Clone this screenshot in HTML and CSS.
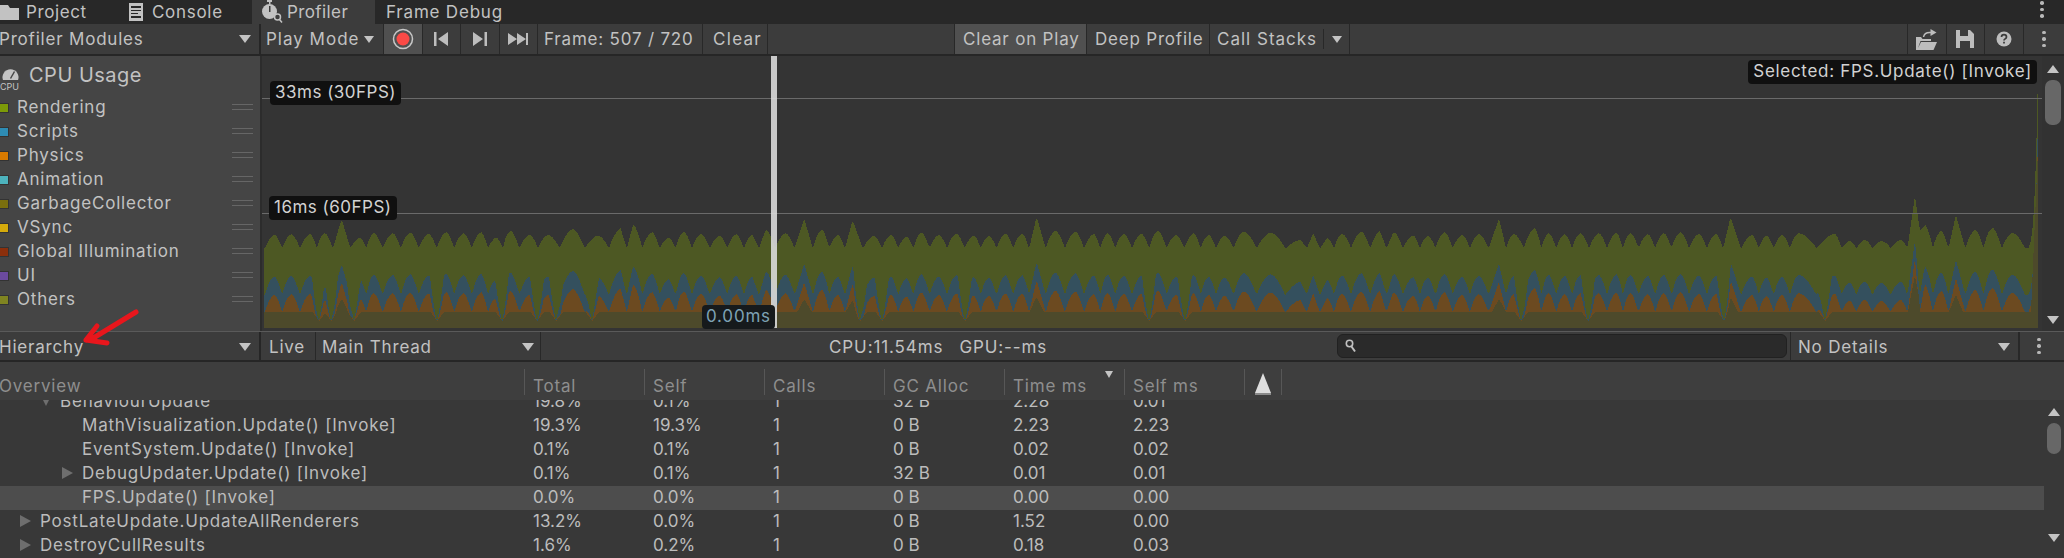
FILE: index.html
```html
<!DOCTYPE html>
<html lang="en">
<head>
  <meta charset="UTF-8">
  <title>Profiler</title>
  <link rel="stylesheet" href="styles.css">
</head>
<body>

<div class="tabs">
  <div class="tab tab-project">
    <svg class="ic" width="20" height="16" viewBox="0 0 20 16"><path d="M0 1h8l2 3h9v12H0z" fill="#c2c2c2"/></svg>
    <span>Project</span>
  </div>
  <div class="tab tab-console">
    <svg class="ic" width="16" height="18" viewBox="0 0 16 18"><path d="M1 0h14v18H1z" fill="#c2c2c2"/><path d="M3 3h10v2H3zM3 7h10v1H3zM3 10h7v1H3zM3 13h10v2H3z" fill="#282828"/></svg>
    <span>Console</span>
  </div>
  <div class="tab tab-profiler">
    <svg class="ic" width="22" height="24" viewBox="0 0 22 24"><path d="M6 0h5v2H9.500v2H8V2H6z" fill="#c2c2c2"/><circle cx="8.500" cy="11.500" r="7.500" fill="#c2c2c2"/><path d="M8 6h1.500v6H8z" fill="#3c3c3c"/><circle cx="16.500" cy="17" r="3" fill="#3c3c3c" stroke="#c2c2c2" stroke-width="1.500"/><path d="M18.500 19.500l2.500 3" stroke="#c2c2c2" stroke-width="1.500"/></svg>
    <span>Profiler</span>
  </div>
  <div class="tab tab-debug"><span>Frame Debug</span></div>
  <div class="tab-spacer"></div>
  <div class="dots dots-tabs"><i></i><i></i><i></i></div>
</div>

<div class="toolbar">
  <div class="tb tb-modules"><span class="cut">Profiler Modules</span><b class="arrow"></b></div>
  <div class="tb tb-mode"><span>Play Mode</span><b class="arrow arrow-sm"></b></div>
  <div class="tb tb-icon tb-on">
    <svg width="22" height="22" viewBox="0 0 22 22"><circle cx="11" cy="11" r="9.500" fill="none" stroke="#c8c8c8" stroke-width="1.500"/><circle cx="11" cy="11" r="6.500" fill="#fb4a46"/></svg>
  </div>
  <div class="tb tb-icon">
    <svg width="16" height="16" viewBox="0 0 16 16"><path d="M1 1h2.500v14H1zM15 1v14L5 8z" fill="#bdbdbd"/></svg>
  </div>
  <div class="tb tb-icon">
    <svg width="16" height="16" viewBox="0 0 16 16"><path d="M12.500 1H15v14h-2.500zM1 1v14l10-7z" fill="#bdbdbd"/></svg>
  </div>
  <div class="tb tb-icon">
    <svg width="22" height="16" viewBox="0 0 22 16"><path d="M1 2v12l9-6zM10 2v12l9-6zM19 2h2v12h-2z" fill="#bdbdbd"/></svg>
  </div>
  <div class="tb tb-frame">Frame: 507 / 720</div>
  <div class="tb tb-clear">Clear</div>
  <div class="tb-spacer tb-spacer-1"></div>
  <div class="tb tb-cop tb-on">Clear on Play</div>
  <div class="tb tb-deep">Deep Profile</div>
  <div class="tb tb-stacks"><span class="stacks-label">Call Stacks</span><b class="arrow arrow-sm"></b></div>
  <div class="tb-spacer"></div>
  <div class="tb tb-tool">
    <svg width="21" height="21" viewBox="0 0 21 21"><path d="M0 8h5l1.500 2H15v2H4.500L2 19l3-6h16l-3.500 8H0z" fill="#bdbdbd"/><path d="M7.500 8c.5-3 3.500-5 8-4.500" fill="none" stroke="#bdbdbd" stroke-width="1.500"/><path d="M14.500 0l6 3.500-6 3.500z" fill="#bdbdbd"/></svg>
  </div>
  <div class="tb tb-tool">
    <svg width="18" height="18" viewBox="0 0 18 18"><path fill-rule="evenodd" d="M0 0h14l4 4v14H0zM4 0v6h8V0zM4 11v7h10v-7z" fill="#bdbdbd"/></svg>
  </div>
  <div class="tb tb-tool">
    <svg width="16" height="16" viewBox="0 0 16 16"><circle cx="8" cy="8" r="7.500" fill="#bdbdbd"/><path d="M5.500 6c0-3.200 5-3.200 5 0 0 2-2.500 1.800-2.500 3.500" fill="none" stroke="#3c3c3c" stroke-width="1.700"/><path d="M7.100 10.700h1.800v1.800H7.100z" fill="#3c3c3c"/></svg>
  </div>
  <div class="tb-last"><div class="dots"><i></i><i></i><i></i></div></div>
</div>

<div class="profiler">
  <div class="modules">
    <div class="module-head">
      <svg class="cpu-ic" width="22" height="26" viewBox="0 0 22 26">
        <path d="M3 14a8 8 0 1 1 15 0z" fill="#c4c4c4"/><path d="M10 12l4-7 1 1-4 7z" fill="#454545"/>
        <text x="0" y="24" class="cpu-txt">CPU</text>
      </svg>
      <span class="module-title">CPU Usage</span>
    </div>
    <div class="legend">
      <div class="legend-row"><i class="sw sw-rendering"></i><span>Rendering</span><u></u></div>
      <div class="legend-row"><i class="sw sw-scripts"></i><span>Scripts</span><u></u></div>
      <div class="legend-row"><i class="sw sw-physics"></i><span>Physics</span><u></u></div>
      <div class="legend-row"><i class="sw sw-animation"></i><span>Animation</span><u></u></div>
      <div class="legend-row"><i class="sw sw-gc"></i><span>GarbageCollector</span><u></u></div>
      <div class="legend-row"><i class="sw sw-vsync"></i><span>VSync</span><u></u></div>
      <div class="legend-row"><i class="sw sw-gi"></i><span>Global Illumination</span><u></u></div>
      <div class="legend-row"><i class="sw sw-ui"></i><span>UI</span><u></u></div>
      <div class="legend-row"><i class="sw sw-others"></i><span>Others</span><u></u></div>
    </div>
  </div>

  <div class="chart">
    <svg id="graph" class="graph" width="1780" height="275" viewBox="0 0 1780 275" shape-rendering="crispEdges"></svg>
    <div class="gridline line-33"></div>
    <div class="gridline line-16"></div>
    <div class="frame-bar"></div>
    <div class="tag tag-33">33ms (30FPS)</div>
    <div class="tag tag-16">16ms (60FPS)</div>
    <div class="tag tag-time">0.00ms</div>
    <div class="tag tag-selected">Selected: FPS.Update() [Invoke]</div>
  </div>

  <div class="vscroll vscroll-chart">
    <b class="arrow arrow-up"></b>
    <div class="thumb thumb-chart"></div>
    <b class="arrow"></b>
  </div>
</div>

<div class="hbar">
  <div class="tb tb-modules"><span class="cut">Hierarchy</span><b class="arrow"></b></div>
  <div class="tb tb-live">Live</div>
  <div class="tb tb-thread"><span>Main Thread</span><b class="arrow"></b></div>
  <div class="stats"><span>CPU:11.54ms</span><span>GPU:--ms</span></div>
  <div class="search">
    <svg width="12" height="14" viewBox="0 0 12 14"><circle cx="4.500" cy="4.500" r="3.200" fill="none" stroke="#c0c0c0" stroke-width="1.600"/><path d="M6.500 7.500l3.500 5" stroke="#c0c0c0" stroke-width="2"/></svg>
  </div>
  <div class="tb tb-details"><span>No Details</span><b class="arrow"></b></div>
  <div class="tb-last tb-last-h"><div class="dots"><i></i><i></i><i></i></div></div>
</div>

<div class="thead row-grid">
  <div class="th th-name">Overview</div>
  <div class="th">Total</div>
  <div class="th">Self</div>
  <div class="th">Calls</div>
  <div class="th">GC Alloc</div>
  <div class="th">Time ms<b class="sort"></b></div>
  <div class="th">Self ms</div>
  <div class="th th-warn">
    <svg width="18" height="24" viewBox="0 0 18 24"><path d="M9 1l8 20H1z" fill="#dedede"/><path d="M1 21h16v2H1z" fill="#8a8a8a"/></svg>
  </div>
</div>

<div class="body">
  <div class="rows">
    <div class="row row-grid row-top">
      <div class="name ind-2"><b class="tw tw-open"></b>BehaviourUpdate</div>
      <div>19.8%</div><div>0.1%</div><div>1</div><div>32 B</div><div>2.28</div><div>0.01</div>
    </div>
    <div class="row row-grid">
      <div class="name ind-3">MathVisualization.Update() [Invoke]</div>
      <div>19.3%</div><div>19.3%</div><div>1</div><div>0 B</div><div>2.23</div><div>2.23</div>
    </div>
    <div class="row row-grid">
      <div class="name ind-3">EventSystem.Update() [Invoke]</div>
      <div>0.1%</div><div>0.1%</div><div>1</div><div>0 B</div><div>0.02</div><div>0.02</div>
    </div>
    <div class="row row-grid">
      <div class="name ind-3"><b class="tw"></b>DebugUpdater.Update() [Invoke]</div>
      <div>0.1%</div><div>0.1%</div><div>1</div><div>32 B</div><div>0.01</div><div>0.01</div>
    </div>
    <div class="row row-grid row-sel">
      <div class="name ind-3">FPS.Update() [Invoke]</div>
      <div>0.0%</div><div>0.0%</div><div>1</div><div>0 B</div><div>0.00</div><div>0.00</div>
    </div>
    <div class="row row-grid">
      <div class="name ind-1"><b class="tw"></b>PostLateUpdate.UpdateAllRenderers</div>
      <div>13.2%</div><div>0.0%</div><div>1</div><div>0 B</div><div>1.52</div><div>0.00</div>
    </div>
    <div class="row row-grid">
      <div class="name ind-1"><b class="tw"></b>DestroyCullResults</div>
      <div>1.6%</div><div>0.2%</div><div>1</div><div>0 B</div><div>0.18</div><div>0.03</div>
    </div>
  </div>
  <div class="vscroll vscroll-table">
    <b class="arrow arrow-up"></b>
    <div class="thumb thumb-table"></div>
    <b class="arrow"></b>
  </div>
</div>

<svg class="red-arrow" width="70" height="50" viewBox="0 0 70 50">
  <path d="M56 5L15 30L6 33M6 33L27 36M6 33L17 19" fill="none" stroke="#e8161c" stroke-width="5" stroke-linecap="round" stroke-linejoin="round"/>
</svg>

<script src="script.js"></script>
</body>
</html>
```

FILE: styles.css
```css
* {
  box-sizing: border-box;
}

body {
  margin: 0;
  width: 2064px;
  height: 558px;
  overflow: hidden;
  position: relative;
  background-color: #383838;
  color: #c2c2c2;
  font-family: 'Inter', 'Liberation Sans', sans-serif;
  font-size: 17px;
  letter-spacing: 0.8px;
  line-height: 20px;
  white-space: nowrap;
}

/* tabs */
.tabs {
  display: flex;
  height: 24px;
  background-color: #282828;
}

.tab {
  display: flex;
  align-items: center;
  height: 24px;
}

.tab-project { width: 128px; gap: 6px; letter-spacing: 0.6px; }
.tab-console { width: 124px; gap: 8px; letter-spacing: 0.7px; }
.tab-profiler { width: 123px; gap: 4px; padding-left: 9px; background-color: #3c3c3c; letter-spacing: 0.4px; }
.tab-debug { padding-left: 11px; }
.tab-spacer { flex: 1; }

.dots {
  display: flex;
  flex-direction: column;
  gap: 3px;
  align-items: center;
}

.dots i {
  width: 3.500px;
  height: 3.500px;
  border-radius: 50%;
  background-color: #b8b8b8;
}

.dots-tabs {
  width: 44px;
  padding-top: 1px;
}

/* toolbars */
.toolbar {
  display: flex;
  height: 32px;
  background-color: #3c3c3c;
  border-bottom: 2px solid #262626;
}

.tb {
  display: flex;
  align-items: center;
  height: 30px;
  flex: none;
  border-right: 1px solid #282828;
}

.tb-modules {
  width: 261px;
  justify-content: space-between;
  padding-right: 8px;
  border-right: 2px solid #262626;
}

.cut {
  margin-left: -1px;
}

.tb-mode { width: 123px; padding-left: 5px; gap: 5px; letter-spacing: 1px; }
.tb-icon { width: 38.500px; justify-content: center; }
.tb-on { background-color: #505050; }
.tb-frame { width: 165px; padding-left: 6px; }
.tb-clear { width: 65px; padding-left: 10px; letter-spacing: 1.300px; }
.tb-spacer { flex: 1; }
.tb-spacer-1 { flex: none; width: 186px; }
.tb-cop { width: 133px; padding-left: 8px; border-left: 1px solid #282828; }
.tb-deep { width: 123px; padding-left: 8px; }
.tb-stacks { width: 140px; padding-left: 7px; }
.stacks-label { width: 107px; border-right: 1px solid #282828; margin-right: 8px; letter-spacing: 1px; }
.tb-tool { width: 38.700px; justify-content: center; border-right: 0; border-left: 1px solid #282828; }

.tb-last {
  display: flex;
  justify-content: center;
  align-items: center;
  width: 41px;
  height: 30px;
  border-left: 1px solid #282828;
}

.arrow {
  display: block;
  width: 0;
  height: 0;
  border-left: 6px solid transparent;
  border-right: 6px solid transparent;
  border-top: 8px solid #c4c4c4;
}

.arrow-sm {
  border-left-width: 5px;
  border-right-width: 5px;
  border-top-width: 7px;
}

.arrow-up {
  border-top: 0;
  border-bottom: 8px solid #c4c4c4;
}

/* profiler area */
.profiler {
  display: flex;
  height: 275px;
}

.modules {
  width: 262px;
  flex: none;
  background-color: #454545;
  border-right: 2px solid #2c2c2c;
}

.module-head {
  display: flex;
  align-items: center;
  height: 39px;
  gap: 7px;
  font-size: 20px;
  letter-spacing: 0.5px;
}

.module-title {
  margin-bottom: 2px;
}

.cpu-ic {
  margin-top: 6px;
}

.cpu-txt {
  font-size: 9px;
  letter-spacing: 0;
  fill: #c4c4c4;
}

.legend-row {
  display: flex;
  align-items: center;
  height: 24px;
}

.sw {
  width: 9px;
  height: 10px;
  margin-right: 8px;
  margin-top: 1px;
  border: 1px solid #333;
  border-left: 0;
}

.sw-rendering { background-color: #7c9a08; }
.sw-scripts { background-color: #2e8cb4; }
.sw-physics { background-color: #d87a00; }
.sw-animation { background-color: #4db3bd; }
.sw-gc { background-color: #7a6f0e; }
.sw-vsync { background-color: #d4aa0c; }
.sw-gi { background-color: #8b2f0c; }
.sw-ui { background-color: #6b4a9e; }
.sw-others { background-color: #7f8421; }

.legend-row u {
  width: 21px;
  height: 6px;
  margin-left: auto;
  margin-right: 7px;
  border-top: 1px solid #666;
  border-bottom: 1px solid #666;
}

.chart {
  position: relative;
  flex: 1;
  background-color: #343434;
}

.graph {
  display: block;
}

.gridline {
  position: absolute;
  left: 0;
  right: 0;
  height: 1px;
  background-color: #6a6a6a;
}

.line-33 { top: 42px; }
.line-16 { top: 157px; }

.frame-bar {
  position: absolute;
  left: 509px;
  top: 0;
  width: 6px;
  height: 272px;
  background-color: rgba(222, 222, 222, 0.88);
}

.tag {
  position: absolute;
  height: 24px;
  line-height: 23px;
  padding: 0 5px;
  background-color: #101010;
  border-radius: 4px;
  color: #d2d2d2;
  letter-spacing: 0.500px;
}

.tag-33 { left: 8px; top: 25px; }
.tag-16 { left: 7px; top: 140px; }
.tag-time { left: 440px; top: 249px; padding: 0 4px; color: #7ea2b4; background-color: #161a1c; letter-spacing: 0.8px; }
.tag-selected { right: 5px; top: 4px; letter-spacing: 0.700px; }

.vscroll {
  position: relative;
  display: flex;
  flex-direction: column;
  align-items: center;
  flex: none;
  background-color: #323232;
}

.vscroll-chart {
  width: 22px;
  padding: 9px 0 7px;
}

.vscroll-table {
  width: 20px;
  padding: 8px 0 0;
  background-color: #383838;
}

.thumb {
  width: 14px;
  margin-top: 7px;
  border-radius: 7px;
  background-color: #676767;
}

.thumb-chart { width: 16px; height: 45px; margin-bottom: 191px; }
.thumb-table { height: 31px; margin-bottom: 80px; }

/* hierarchy bar */
.hbar {
  display: flex;
  height: 31px;
  background-color: #3c3c3c;
  border-top: 1px solid #5a5a5a;
  border-bottom: 2px solid #262626;
}

.hbar .tb {
  height: 28px;
  padding-top: 2px;
}

.tb-live { width: 55px; padding-left: 8px; }
.tb-thread { width: 225px; padding: 0 6px; justify-content: space-between; }

.stats {
  display: flex;
  gap: 16px;
  align-items: center;
  width: 796px;
  padding-left: 288px;
  padding-top: 2px;
  letter-spacing: 0.9px;
}

.search {
  display: flex;
  align-items: center;
  width: 450px;
  height: 24px;
  margin-top: 2px;
  padding-left: 7px;
  background-color: #2a2a2a;
  border: 1px solid #212121;
  border-radius: 6px;
}

.tb-details {
  width: 229px;
  margin-left: 3px;
  padding: 0 8px 0 7px;
  justify-content: space-between;
  border-left: 1px solid #282828;
}

.tb-last-h {
  width: 39px;
  height: 28px;
}

/* table */
.row-grid {
  display: grid;
  grid-template-columns: 524px 120px 120px 120px 120px 120px 120px 38px;
}

.thead {
  height: 38px;
  background-color: #3e3e3e;
  color: #8e8e8e;
}

.th {
  position: relative;
  height: 26px;
  margin-top: 7px;
  line-height: 34px;
  padding-left: 8px;
  border-left: 1px solid #575757;
}

.th-name {
  padding-left: 0;
  margin-left: -1px;
  border-left: 0;
}

.th-warn {
  padding: 3px 0 0 9px;
  border-right: 1px solid #575757;
  line-height: 0;
}

.sort {
  position: absolute;
  left: 100px;
  top: 2px;
  width: 0;
  height: 0;
  border-left: 4px solid transparent;
  border-right: 4px solid transparent;
  border-top: 7px solid #c4c4c4;
}

.body {
  display: flex;
  height: 158px;
}

.rows {
  flex: 1;
  overflow: hidden;
}

.row {
  height: 24px;
  line-height: 22px;
  color: #bcbcbc;
  letter-spacing: 0;
}

.row-top {
  margin-top: -10px;
}

.row > div {
  padding-left: 9px;
}

.row > div.name {
  display: flex;
  align-items: center;
  height: 22px;
  letter-spacing: 0.8px;
}

.row-sel {
  background-color: #4d4d4d;
}

.ind-1 { padding-left: 40px !important; }
.ind-2 { padding-left: 61px !important; }
.ind-3 { padding-left: 82px !important; }

.tw {
  width: 0;
  height: 0;
  margin-left: -20px;
  margin-right: 9px;
  border-top: 6px solid transparent;
  border-bottom: 6px solid transparent;
  border-left: 11px solid #6e6e6e;
}

.tw-open {
  margin-right: 9px;
  border-top: 10px solid #6e6e6e;
  border-bottom: 0;
  border-left: 5px solid transparent;
  border-right: 5px solid transparent;
  margin-left: -20px;
}

/* annotation drawn on the screenshot */
.red-arrow {
  position: absolute;
  left: 80px;
  top: 307px;
}
```

FILE: script.js
```js
// peaks of the cpu graph, read off at 3x: [x, y, valley after it]
const runs = [
  { start: 264, peaks: [[30,60],[80,58],[137,57],[181,55],[233,12],[286,68],[328,55],[385,55],[437,53],[492,57],[545,52],[597,55],[650,52],[695,68],[738,48],[795,60],[850,60],[925,43],[1000,62],[1070,40],[1107,30],[1163,52],[1212,68],[1258,50],[1310,57],[1365,62],[1415,58],[1465,58],[1505,45]] },
  { start: 780, peaks: [[15,55],[73,12],[125,45],[172,60],[218,15],[280,63],[332,60],[378,65],[423,53],[475,60],[528,56],[580,62],[625,63],[675,56],[725,56],[770,5],[825,48],[885,50],[940,57],[982,55],[1030,57],[1083,57],[1133,48],[1187,60],[1240,55],[1285,60],[1332,63],[1390,50],[1470,53]] },
  { start: 1300, peaks: [[1,75],[40,55],[80,70],[125,57],[182,50],[240,48],[280,52],[338,62],[382,63],[432,52],[485,60],[535,58],[597,12],[640,57],[703,40],[745,55],[793,58],[840,55],[895,55],[948,53],[990,55],[1042,58],[1090,55],[1140,52],[1195,57],[1247,57],[1292,5],[1355,60],[1398,63],[1445,60],[1495,55]] },
  { start: 1820, peaks: [[43,57],[87,78],[132,75],[183,78],[240,75],[285,-57,45],[314,30],[363,48],[408,0],[465,45],[516,39],[576,54]] }
];

// deep valleys in the lower layers, page x
const dips = [319,331,354,437,502,537,556,592,860,882,965,1149,1185,1521,1588,1724,1825];

const OFFSET_X = 262;
const END_X = 2038;

const peaks = [];
runs.forEach(run => {
  run.peaks.forEach(p => {
    const x = run.start + p[0] / 3;
    if (peaks.length && x < peaks[peaks.length - 1].x + 3) return;
    peaks.push({ x: x, y: p[1], valley: p[2] === undefined ? 100 : p[2] });
  });
});
peaks.push({ x: END_X, y: -435, valley: 100, last: true });

function humpAt(x) {
  let i = 0;
  while (i < peaks.length - 1 && peaks[i + 1].x <= x) i++;
  let peak = peaks[i];
  const next = peaks[i + 1];
  if (next && next.x - x < x - peak.x) {
    peak = next;
    i = i + 1;
  }
  const side = x < peak.x ? peaks[i - 1] : peaks[i + 1];
  const half = side ? Math.abs(side.x - peak.x) / 2 : 9;
  const valley = x < peak.x ? (side ? side.valley : 100) : peak.valley;
  return { peak: peak, valley: valley, t: Math.min(Math.abs(x - peak.x) / half, 1), half: half };
}

function shape(hump) {
  const h = hump.valley - hump.peak.y;
  if (hump.peak.last) return Math.pow(1 - hump.t, 4);
  if (h > 80 || hump.half < 7) return 1 - hump.t;
  return 1 - Math.pow(hump.t, 1.7);
}

function toY(u) {
  return Math.round(159 + u / 3);
}

const greenLine = [], blueLine = [], orangeLine = [], baseLine = [];
for (let x = 264; x <= END_X; x++) {
  const hump = humpAt(x);
  const k = shape(hump);
  const spike = 100 - hump.peak.y > 80;
  const extra = spike ? 10 : 0;

  const t = hump.valley - (hump.valley - hump.peak.y) * k;
  let b = 240 - (240 - (hump.peak.y + 125 + extra)) * k;
  let o = 292 - (292 - (hump.peak.y + 180 + extra)) * k;
  let g = 290;

  if (spike) {
    const near = Math.max(0, 1 - Math.abs(x - hump.peak.x) / 7);
    g = 290 - (290 - (hump.peak.y + 240)) * near;
  }

  dips.forEach(d => {
    const near = Math.max(0, 1 - Math.abs(x - d) / 7);
    b = b + (318 - b) * near;
    o = o + (318 - o) * near;
    g = g + (318 - g) * near;
  });

  const sx = x - OFFSET_X;
  greenLine.push([sx, toY(t)]);
  blueLine.push([sx, toY(b)]);
  orangeLine.push([sx, toY(o)]);
  baseLine.push([sx, toY(g)]);
}

function layer(points, color) {
  const first = points[0][0];
  const last = points[points.length - 1][0];
  const line = points.map(p => p[0] + ' ' + p[1]).join(' L');
  const path = document.createElementNS('http://www.w3.org/2000/svg', 'path');
  path.setAttribute('d', 'M' + first + ' 272 L' + line + ' L' + last + ' 272 Z');
  path.setAttribute('fill', color);
  document.getElementById('graph').appendChild(path);
}

layer(greenLine, '#4d5823');
layer(blueLine, '#34505e');
layer(orangeLine, '#6c4a20');
layer(baseLine, '#4d4a2b');
```
